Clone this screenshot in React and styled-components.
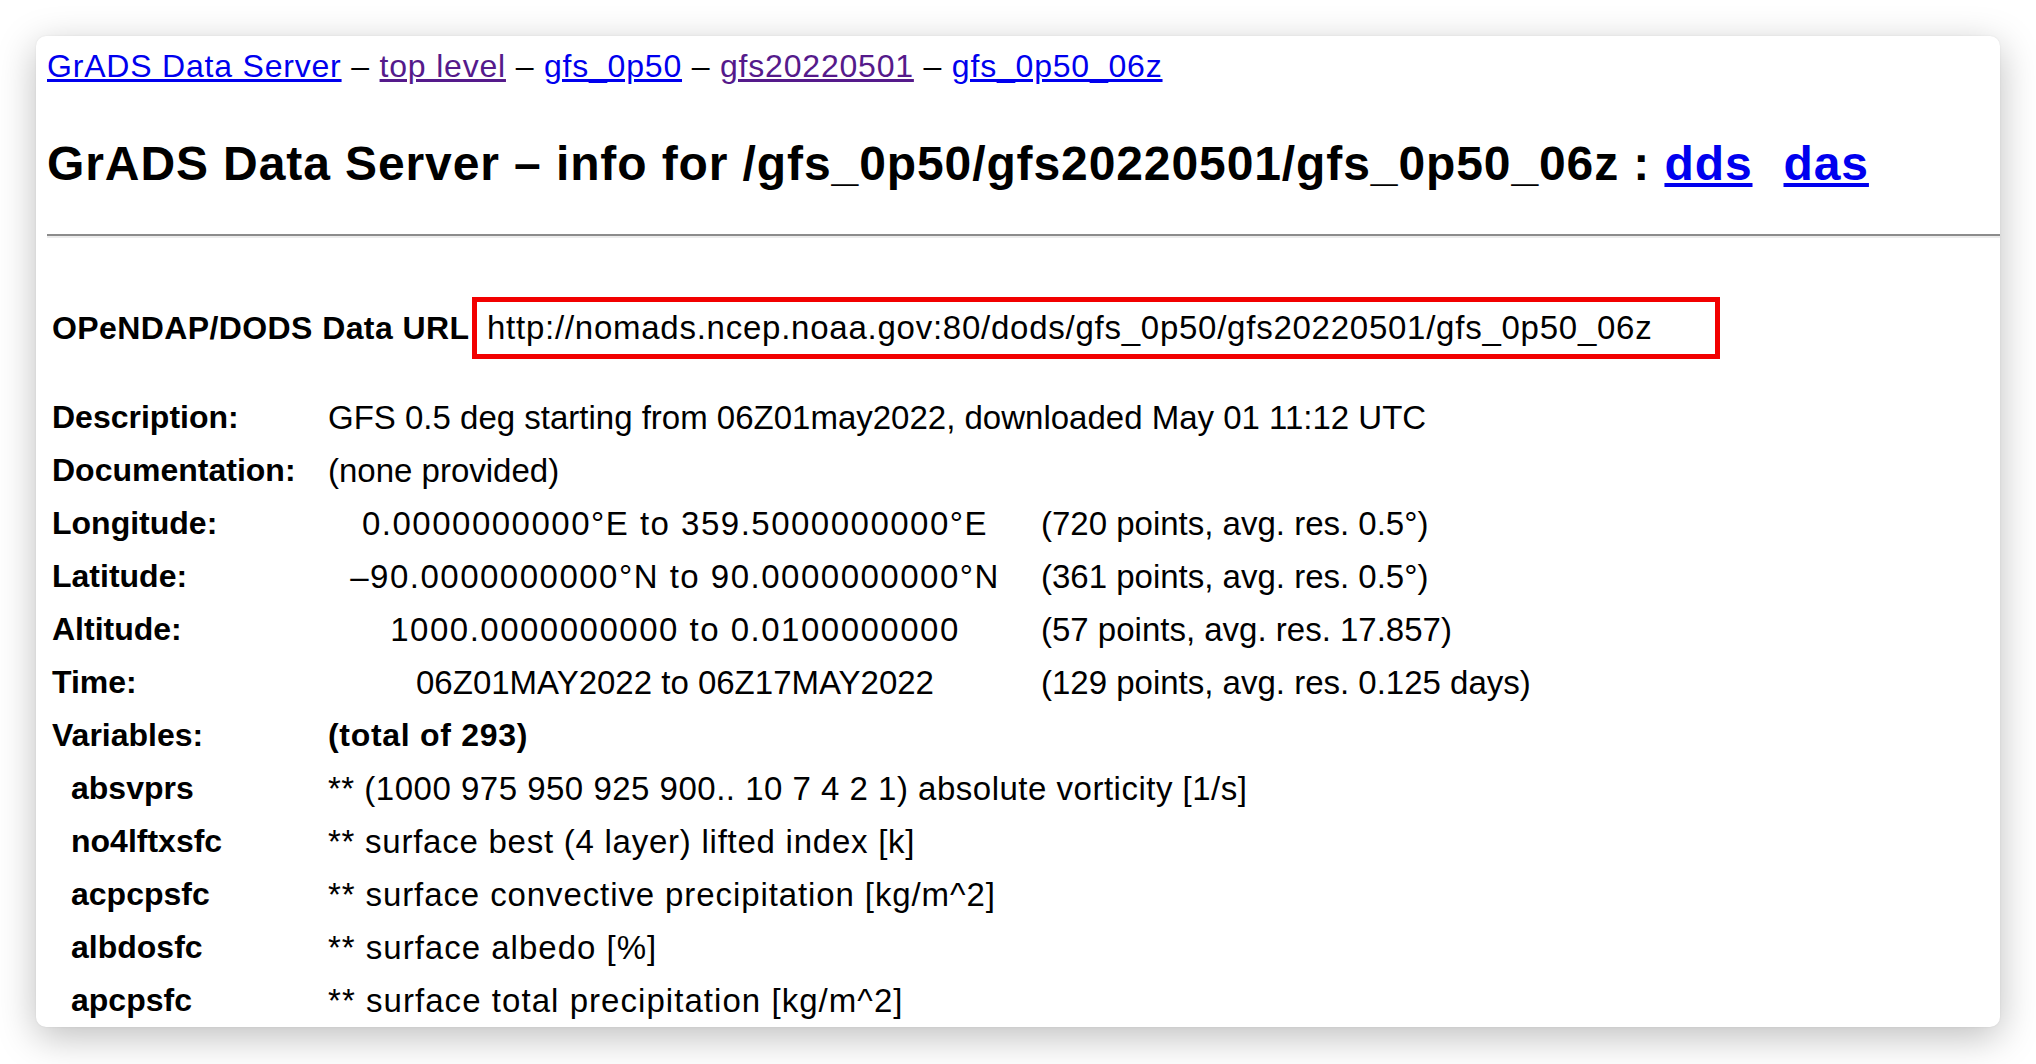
import React from 'react';
import styled, { createGlobalStyle } from 'styled-components';

const GlobalStyle = createGlobalStyle`
  html, body { margin: 0; padding: 0; background: #ffffff; }
  body {
    font-family: "Liberation Sans", Arial, Helvetica, sans-serif;
    color: #000;
  }
`;

const Stage = styled.div`
  width: 2036px;
  height: 1064px;
  box-sizing: border-box;
  padding: 36px 36px 0 36px;
  overflow: hidden;
`;

const Window = styled.div`
  width: 1964px;
  height: 991px;
  box-sizing: border-box;
  padding: 12px 0 0 11px;
  background: #ffffff;
  border-radius: 10px;
  box-shadow: 0 10px 38px rgba(0, 0, 0, 0.26), 0 0 2px rgba(0, 0, 0, 0.08);
  overflow: hidden;
`;

const Breadcrumb = styled.nav`
  font-size: 32px;
  line-height: 37px;
  letter-spacing: 0.8px;
  white-space: nowrap;
`;

const Link = styled.a`
  color: ${(p) => (p.$visited ? '#551a8b' : '#0000ee')};
  text-decoration: underline;
  cursor: pointer;
  margin-left: ${(p) => p.$gap || 0}px;
`;

const Sep = styled.span`
  color: #000;
`;

const Heading = styled.h1`
  margin: 51px 0 0 0;
  font-size: 48px;
  line-height: 56px;
  font-weight: bold;
  letter-spacing: 0.9px;
  white-space: nowrap;
`;

const Rule = styled.hr`
  margin: 42px 0 0 0;
  height: 0;
  border: none;
  border-top: 2px solid #8c8c8c;
  border-bottom: 2px solid #ececec;
`;

const UrlRow = styled.div`
  display: flex;
  align-items: center;
  margin: 59px 0 0 5px;
`;

const UrlLabel = styled.span`
  min-width: 420px;
  font-size: 32px;
  font-weight: bold;
  letter-spacing: 0.4px;
  white-space: nowrap;
`;

const UrlBox = styled.div`
  box-sizing: border-box;
  width: 1248px;
  height: 62px;
  border: 5px solid #f20000;
  padding-left: 10px;
  display: flex;
  align-items: center;
  font-size: 33px;
  letter-spacing: 0.75px;
  white-space: nowrap;
`;

const InfoGrid = styled.div`
  display: grid;
  grid-template-columns: 257px 694px auto;
  column-gap: 19px;
  grid-auto-rows: 53px;
  margin: 32px 0 0 5px;
  line-height: 53px;
  white-space: nowrap;
`;

const Label = styled.div`
  font-size: 32px;
  font-weight: bold;
  padding-left: ${(p) => (p.$indent ? 19 : 0)}px;
`;

const Value = styled.div`
  font-size: ${(p) => (p.$bold ? 32 : 33)}px;
  font-weight: ${(p) => (p.$bold ? 'bold' : 'normal')};
  text-align: ${(p) => (p.$center ? 'center' : 'left')};
  letter-spacing: ${(p) => p.$spacing || 0}px;
  grid-column: ${(p) => (p.$span ? '2 / -1' : 'auto')};
`;

const dims = [
  ['Longitude:', '0.0000000000°E to 359.5000000000°E', '(720 points, avg. res. 0.5°)', 1.5],
  ['Latitude:', '–90.0000000000°N to 90.0000000000°N', '(361 points, avg. res. 0.5°)', 1.5],
  ['Altitude:', '1000.0000000000 to 0.0100000000', '(57 points, avg. res. 17.857)', 1.5],
  ['Time:', '06Z01MAY2022 to 06Z17MAY2022', '(129 points, avg. res. 0.125 days)', 0],
];

const vars = [
  ['absvprs', '** (1000 975 950 925 900.. 10 7 4 2 1) absolute vorticity [1/s]', 0.5],
  ['no4lftxsfc', '** surface best (4 layer) lifted index [k]', 0.75],
  ['acpcpsfc', '** surface convective precipitation [kg/m^2]', 0.9],
  ['albdosfc', '** surface albedo [%]', 1],
  ['apcpsfc', '** surface total precipitation [kg/m^2]', 1.05],
];

export default function App() {
  return (
    <>
      <GlobalStyle />
      <Stage>
        <Window>
          <Breadcrumb>
            <Link>GrADS Data Server</Link>
            <Sep> – </Sep>
            <Link $visited>top level</Link>
            <Sep> – </Sep>
            <Link>gfs_0p50</Link>
            <Sep> – </Sep>
            <Link $visited>gfs20220501</Link>
            <Sep> – </Sep>
            <Link>gfs_0p50_06z</Link>
          </Breadcrumb>
          <Heading>
            GrADS Data Server – info for /gfs_0p50/gfs20220501/gfs_0p50_06z :{' '}
            <Link>dds</Link>
            <Link $gap={31}>das</Link>
          </Heading>
          <Rule />
          <UrlRow>
            <UrlLabel>OPeNDAP/DODS Data URL</UrlLabel>
            <UrlBox>http://nomads.ncep.noaa.gov:80/dods/gfs_0p50/gfs20220501/gfs_0p50_06z</UrlBox>
          </UrlRow>
          <InfoGrid>
            <Label>Description:</Label>
            <Value $span>GFS 0.5 deg starting from 06Z01may2022, downloaded May 01 11:12 UTC</Value>
            <Label>Documentation:</Label>
            <Value $span>(none provided)</Value>
            {dims.map(([label, range, res, spacing]) => (
              <React.Fragment key={label}>
                <Label>{label}</Label>
                <Value $center $spacing={spacing}>{range}</Value>
                <Value>{res}</Value>
              </React.Fragment>
            ))}
            <Label>Variables:</Label>
            <Value $span $bold $spacing={0.7}>(total of 293)</Value>
            {vars.map(([name, desc, spacing]) => (
              <React.Fragment key={name}>
                <Label $indent>{name}</Label>
                <Value $span $spacing={spacing}>{desc}</Value>
              </React.Fragment>
            ))}
          </InfoGrid>
        </Window>
      </Stage>
    </>
  );
}
